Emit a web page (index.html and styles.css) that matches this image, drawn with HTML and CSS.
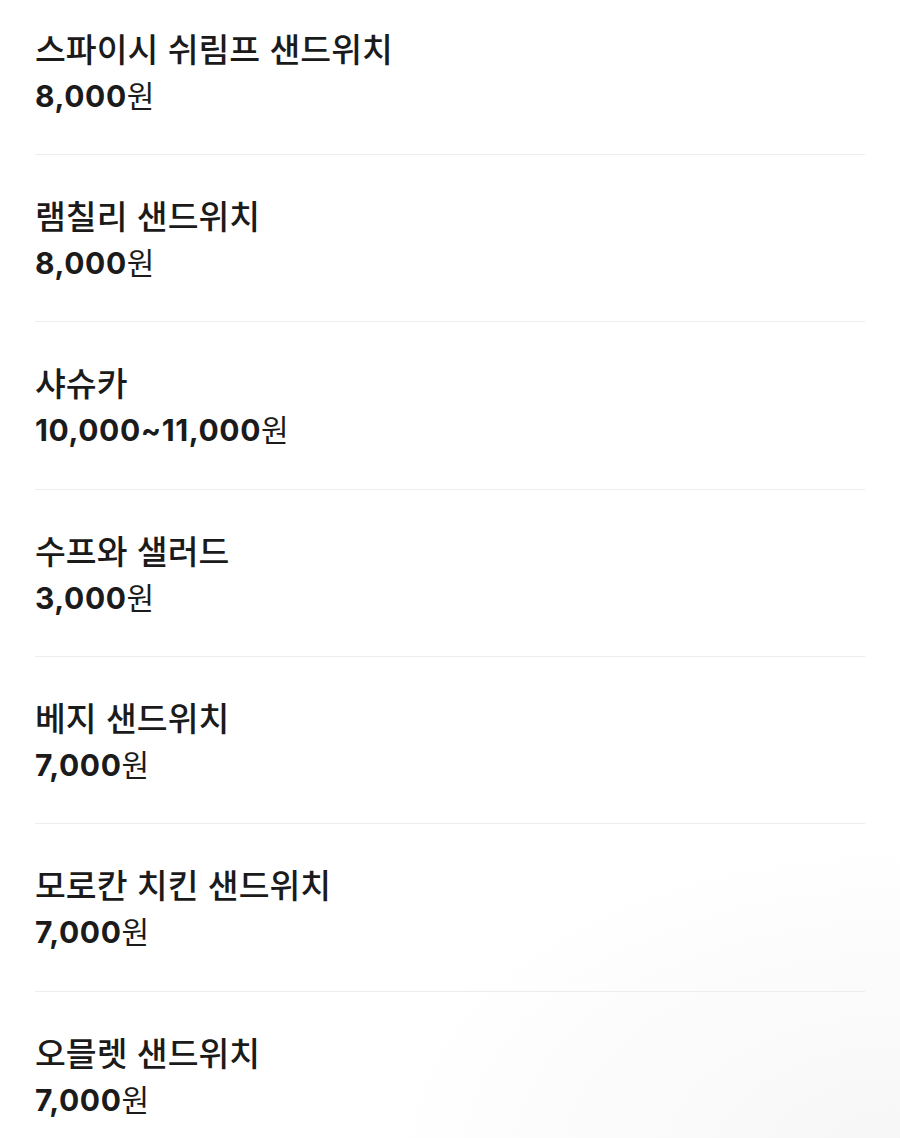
FILE: index.html
```html
<!DOCTYPE html>
<html lang="ko">
<head>
  <meta charset="UTF-8">
  <meta name="viewport" content="width=device-width, initial-scale=1.0">
  <title>메뉴</title>
  <link rel="stylesheet" href="styles.css">
</head>
<body>
  <main>
    <ul class="menu">
      <li class="item">
        <p class="name">스파이시 쉬림프 샌드위치</p>
        <p class="price">8,000<span class="won">원</span></p>
      </li>
      <li class="item">
        <p class="name">램칠리 샌드위치</p>
        <p class="price">8,000<span class="won">원</span></p>
      </li>
      <li class="item">
        <p class="name">샤슈카</p>
        <p class="price">10,000~11,000<span class="won">원</span></p>
      </li>
      <li class="item">
        <p class="name">수프와 샐러드</p>
        <p class="price">3,000<span class="won">원</span></p>
      </li>
      <li class="item">
        <p class="name">베지 샌드위치</p>
        <p class="price">7,000<span class="won">원</span></p>
      </li>
      <li class="item">
        <p class="name">모로칸 치킨 샌드위치</p>
        <p class="price">7,000<span class="won">원</span></p>
      </li>
      <li class="item">
        <p class="name">오믈렛 샌드위치</p>
        <p class="price">7,000<span class="won">원</span></p>
      </li>
    </ul>
  </main>
</body>
</html>
```

FILE: styles.css
```css
* {
  padding: 0;
  margin: 0;
  box-sizing: border-box;
}
html {
  background-color: #fff;
}
body {
  min-height: 100vh;
  background: radial-gradient(ellipse 520px 320px at 100% 100%, #f6f6f6, #fff);
  color: #1b1b1b;
  font-family: "Noto Sans CJK KR", "Noto Sans", sans-serif;
}
.menu {
  list-style: none;
  padding: 0 35px;
}
.item {
  padding: 36px 0 34.4px;
  border-bottom: 1px solid #ededed;
}
.item:first-child {
  padding-top: 23.5px;
}
.name {
  font-size: 33.5px;
  font-weight: 500;
  line-height: 48px;
}
.price {
  font-family: Inter, "Noto Sans CJK KR", sans-serif;
  font-size: 30px;
  font-weight: 700;
  line-height: 48px;
  letter-spacing: 0.6px;
}
.won {
  font-family: "Noto Sans CJK KR", sans-serif;
  font-weight: 400;
  line-height: 1;
  letter-spacing: 0;
}
```
